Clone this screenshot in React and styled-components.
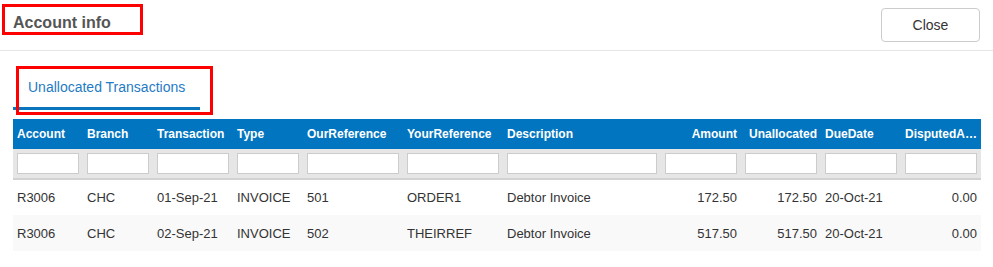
import React from "react";
import styled, { createGlobalStyle } from "styled-components";

const GlobalStyle = createGlobalStyle`
  body {
    margin: 0;
    background: #fff;
    font-family: "Liberation Sans", Arial, sans-serif;
  }
`;

const Page = styled.div`
  width: 993px;
`;

const Header = styled.div`
  display: flex;
  justify-content: space-between;
  align-items: flex-start;
  height: 50px;
  border-bottom: 1px solid #e5e5e5;
`;

const Title = styled.h4`
  box-sizing: border-box;
  margin: 4px 0 0 2px;
  width: 141px;
  height: 31px;
  padding: 8px 0 0 8px;
  border: 3px solid #ff0000;
  font-size: 16px;
  font-weight: bold;
  color: #555;
  line-height: 16px;
`;

const CloseButton = styled.button`
  box-sizing: border-box;
  margin: 8px 13px 0 0;
  width: 99px;
  height: 34px;
  background: #fff;
  border: 1px solid #ccc;
  border-radius: 4px;
  font-family: "Liberation Sans", Arial, sans-serif;
  font-size: 14px;
  color: #333;
`;

const Body = styled.div`
  padding: 15px 12px 0 13px;
`;

const Tabs = styled.div`
  display: flex;
  margin-bottom: 9px;
`;

const Tab = styled.div`
  position: relative;
  box-sizing: border-box;
  width: 187px;
  padding: 13px 0 11px 15px;
  font-size: 14px;
  line-height: 17px;
  color: #1f7bc4;
  border-bottom: 3px solid #0a74bd;
`;

const Highlight = styled.span`
  position: absolute;
  left: 3px;
  top: 0;
  width: 197px;
  height: 49px;
  box-sizing: border-box;
  border: 3px solid #ff0000;
`;

const Table = styled.table`
  width: 968px;
  border-collapse: collapse;
  table-layout: fixed;
  font-size: 13px;
`;

const HeadCell = styled.th`
  height: 30px;
  padding: 0 4px;
  background: #0175bf;
  color: #fff;
  font-size: 12px;
  font-weight: bold;
  text-align: ${(p) => (p.$right ? "right" : "left")};
  white-space: nowrap;
  overflow: hidden;
  text-overflow: ellipsis;
`;

const FilterRow = styled.tr`
  background: #e6e6e6;
  border-bottom: 2px solid #d2d2d2;
`;

const FilterCell = styled.td`
  height: 29px;
  padding: 0 4px;
`;

const FilterInput = styled.input`
  box-sizing: border-box;
  display: block;
  width: 100%;
  height: 21px;
  border: 1px solid #ccc;
  background: #fff;
`;

const Row = styled.tr`
  background: ${(p) => (p.$alt ? "#f9f9f9" : "#fff")};
`;

const Cell = styled.td`
  height: ${(p) => (p.$tall ? 36 : 35)}px;
  padding: 0 4px;
  color: #333;
  text-align: ${(p) => (p.$right ? "right" : "left")};
  white-space: nowrap;
`;

const columns = [
  { key: "account", label: "Account", width: 70 },
  { key: "branch", label: "Branch", width: 70 },
  { key: "transaction", label: "Transaction", width: 80 },
  { key: "type", label: "Type", width: 70 },
  { key: "our", label: "OurReference", width: 100 },
  { key: "your", label: "YourReference", width: 100 },
  { key: "desc", label: "Description", width: 158 },
  { key: "amount", label: "Amount", width: 80, right: true },
  { key: "unalloc", label: "Unallocated", width: 80, right: true },
  { key: "due", label: "DueDate", width: 80 },
  { key: "disputed", label: "DisputedAmount", width: 80, right: true },
];

const rows = [
  {
    account: "R3006",
    branch: "CHC",
    transaction: "01-Sep-21",
    type: "INVOICE",
    our: "501",
    your: "ORDER1",
    desc: "Debtor Invoice",
    amount: "172.50",
    unalloc: "172.50",
    due: "20-Oct-21",
    disputed: "0.00",
  },
  {
    account: "R3006",
    branch: "CHC",
    transaction: "02-Sep-21",
    type: "INVOICE",
    our: "502",
    your: "THEIRREF",
    desc: "Debtor Invoice",
    amount: "517.50",
    unalloc: "517.50",
    due: "20-Oct-21",
    disputed: "0.00",
  },
];

export default function App() {
  return (
    <Page>
      <GlobalStyle />
      <Header>
        <Title>Account info</Title>
        <CloseButton>Close</CloseButton>
      </Header>
      <Body>
        <Tabs>
          <Tab>
            Unallocated Transactions
            <Highlight />
          </Tab>
        </Tabs>
        <Table>
          <colgroup>
            {columns.map((c) => (
              <col key={c.key} style={{ width: c.width }} />
            ))}
          </colgroup>
          <thead>
            <tr>
              {columns.map((c) => (
                <HeadCell key={c.key} $right={c.right && c.key !== "disputed"}>
                  {c.label}
                </HeadCell>
              ))}
            </tr>
            <FilterRow>
              {columns.map((c) => (
                <FilterCell key={c.key}>
                  <FilterInput type="text" />
                </FilterCell>
              ))}
            </FilterRow>
          </thead>
          <tbody>
            {rows.map((r, i) => (
              <Row key={i} $alt={i % 2 === 1}>
                {columns.map((c) => (
                  <Cell key={c.key} $right={c.right} $tall={i % 2 === 1}>
                    {r[c.key]}
                  </Cell>
                ))}
              </Row>
            ))}
          </tbody>
        </Table>
      </Body>
    </Page>
  );
}
